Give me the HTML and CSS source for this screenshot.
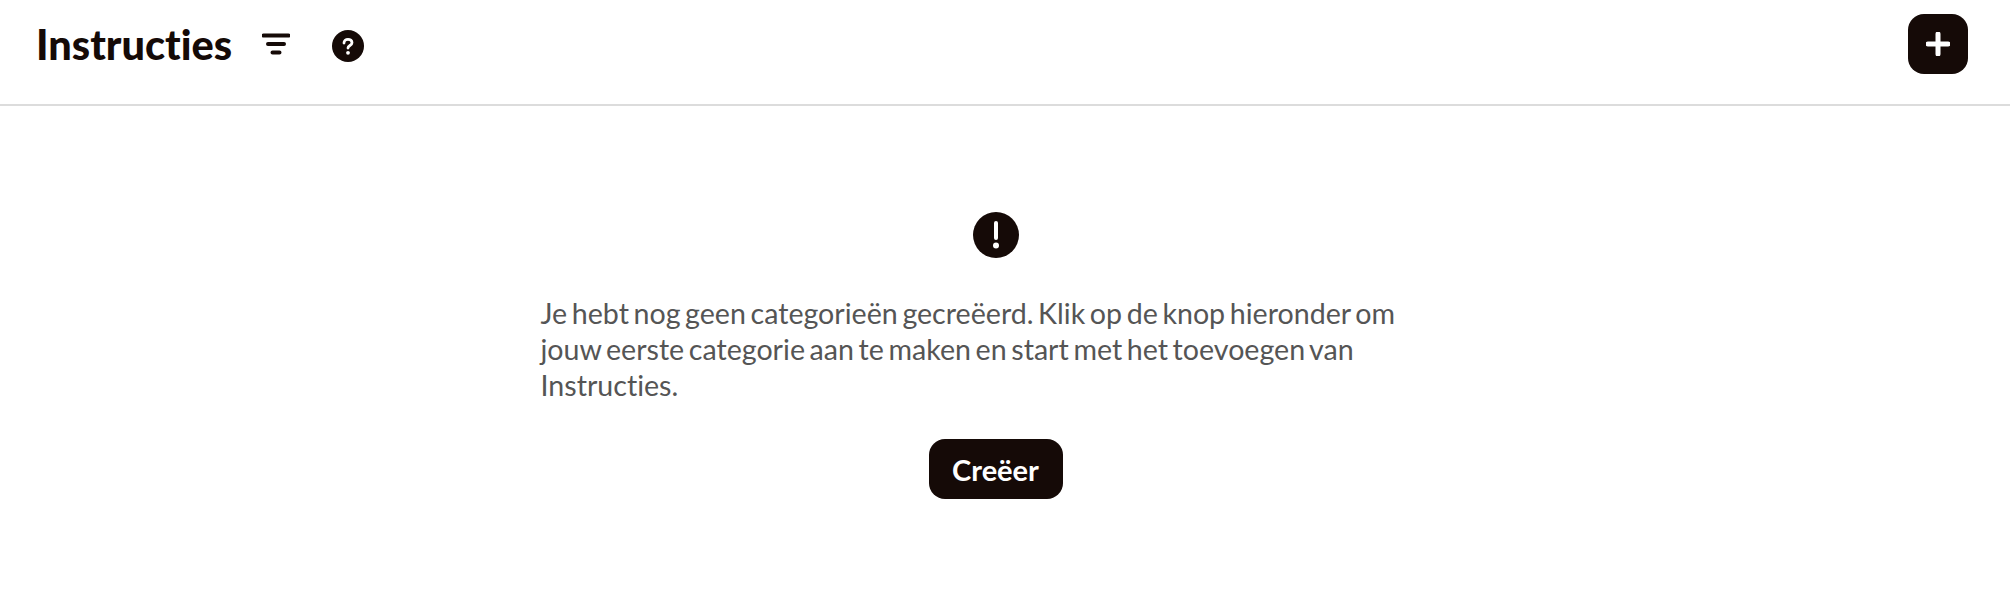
FILE: index.html
```html
<!DOCTYPE html>
<html lang="en">
<head>
    <meta charset="UTF-8">
    <meta name="viewport" content="width=device-width, initial-scale=1.0">
    <title>Instructies</title>
    <link rel="stylesheet" href="styles.css">
</head>
<body>

    <header class="topbar">
        <div class="topbar-left">
            <h1>Instructies</h1>
            <button class="icon-btn filter-btn" aria-label="Filter">
                <svg width="28" height="22" viewBox="0 0 28 22">
                    <path d="M1.500 2.500h25M6 11h16M10.500 19.500h7" stroke="#150a07" stroke-width="4" stroke-linecap="round" fill="none"/>
                </svg>
            </button>
            <button class="icon-btn help-btn" aria-label="Help">
                <svg width="32" height="32" viewBox="0 0 32 32">
                    <circle cx="16" cy="16" r="16" fill="#150a07"/>
                    <path d="M12 13c0-2.300 1.800-3.700 4-3.700s4 1.300 4 3.400c0 2.800-4 2.800-4 5.300" stroke="#fff" stroke-width="2.800" stroke-linecap="round" fill="none"/>
                    <circle cx="16" cy="22.800" r="1.900" fill="#fff"/>
                </svg>
            </button>
        </div>
        <button class="add-btn" aria-label="Toevoegen">
            <svg width="24" height="24" viewBox="0 0 24 24">
                <path d="M2 12h20M12 2v20" stroke="#fff" stroke-width="5" stroke-linecap="round" fill="none"/>
            </svg>
        </button>
    </header>

    <main class="empty-state">
        <svg class="alert-icon" width="46" height="46" viewBox="0 0 46 46">
            <circle cx="23" cy="23" r="23" fill="#150a07"/>
            <path d="M23 11v15" stroke="#fff" stroke-width="4" stroke-linecap="round" fill="none"/>
            <circle cx="23" cy="33.500" r="3" fill="#fff"/>
        </svg>
        <p>Je hebt nog geen categorieën gecreëerd. Klik op de knop hieronder om jouw eerste categorie aan te maken en start met het toevoegen van Instructies.</p>
        <button class="create-btn">Creëer</button>
    </main>

</body>
</html>
```

FILE: styles.css
```css
body {
    font-family: Lato, 'Open Sans', sans-serif;
    font-variant-ligatures: none;
    margin: 0;
    background-color: #fff;
    color: #150a07;
}

.topbar {
    display: flex;
    align-items: center;
    justify-content: space-between;
    box-sizing: content-box;
    height: 88px;
    padding: 0 42px 16px 36px;
    border-bottom: 2px solid #dcdcdc;
}

.topbar-left {
    display: flex;
    align-items: center;
}

h1 {
    margin: 0;
    font-size: 41.5px;
    font-weight: 900;
    line-height: 48px;
}

.icon-btn {
    display: flex;
    padding: 0;
    border: none;
    background: none;
}

.filter-btn {
    margin-left: 30px;
}

.help-btn {
    margin-left: 42px;
    margin-top: 4px;
}

.add-btn {
    display: flex;
    align-items: center;
    justify-content: center;
    width: 60px;
    height: 60px;
    padding: 0;
    border: none;
    border-radius: 16px;
    background-color: #150a07;
}

.empty-state {
    display: flex;
    flex-direction: column;
    align-items: center;
    padding: 106px 19px 0 0;
}

.alert-icon {
    display: block;
}

.empty-state p {
    width: 910px;
    margin: 37px 0 0;
    font-size: 28.6px;
    line-height: 36px;
    word-spacing: -2.7px;
    color: #555;
}

.create-btn {
    width: 134px;
    height: 60px;
    margin-top: 36px;
    padding: 0;
    border: none;
    border-radius: 16px;
    background-color: #150a07;
    color: #fff;
    font-family: inherit;
    font-size: 29px;
    font-weight: 700;
}
```
